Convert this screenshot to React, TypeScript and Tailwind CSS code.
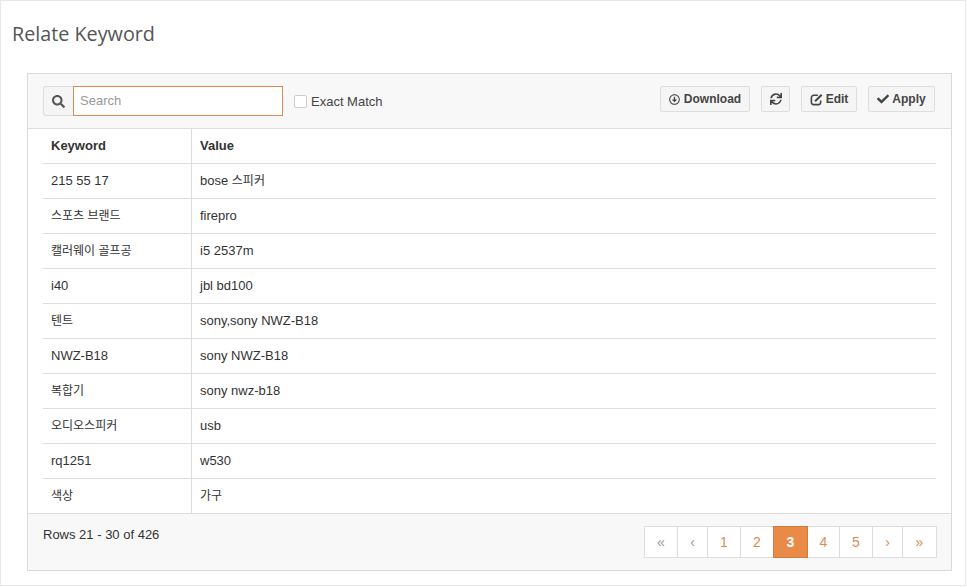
import { FaSearch, FaSync, FaCheck, FaRegArrowAltCircleDown } from 'react-icons/fa';

const rows = [
  ['215 55 17', 'bose 스피커'],
  ['스포츠 브랜드', 'firepro'],
  ['캘러웨이 골프공', 'i5 2537m'],
  ['i40', 'jbl bd100'],
  ['텐트', 'sony,sony NWZ-B18'],
  ['NWZ-B18', 'sony NWZ-B18'],
  ['복합기', 'sony nwz-b18'],
  ['오디오스피커', 'usb'],
  ['rq1251', 'w530'],
  ['색상', '가구'],
];

const pages = [
  { label: '«', width: 'w-[34px]', muted: true },
  { label: '‹', width: 'w-[31px]', muted: true },
  { label: '1', width: 'w-[34px]' },
  { label: '2', width: 'w-[34px]' },
  { label: '3', width: 'w-[35px]', active: true },
  { label: '4', width: 'w-[33px]' },
  { label: '5', width: 'w-[34px]' },
  { label: '›', width: 'w-[31px]' },
  { label: '»', width: 'w-[35px]' },
];

// Korean runs sit a little smaller than the latin text around them
function Cell({ text }: { text: string }) {
  const parts = text.split(/([가-힣]+(?: [가-힣]+)*)/);
  return (
    <>
      {parts.map((part, i) =>
        i % 2 === 1 ? (
          <span key={i} className="text-[12px]">
            {part}
          </span>
        ) : (
          part
        ),
      )}
    </>
  );
}

function EditIcon() {
  return (
    <svg width="13" height="13" viewBox="0 0 14 14" fill="none" stroke="currentColor">
      <path d="M8.5 2.5H4A2.5 2.5 0 0 0 1.5 5v5A2.5 2.5 0 0 0 4 12.5h5a2.5 2.5 0 0 0 2.5-2.5V8" strokeWidth="1.7" />
      <path d="M5.5 8.8 12.6 1.8" strokeWidth="2.2" />
    </svg>
  );
}

export default function App() {
  return (
    <div className="h-[587px] w-[967px] overflow-hidden bg-white font-['Liberation_Sans','Noto_Sans_CJK_KR',sans-serif] text-[13px] text-[#333]">
      <div className="h-[586px] w-[966px] border border-[#e8e8e8] pl-[26px] pr-[13px]">
        {/* Title */}
        <h1 className="-ml-[15px] h-[72px] pt-[19px] font-['Open_Sans',sans-serif] text-[19.75px] leading-[28px] text-[#555]">
          Relate Keyword
        </h1>

        <div className="h-[498px] w-[925px] border border-[#d9d9d9]">
          {/* Toolbar */}
          <div className="flex h-[55px] items-start justify-between border-b border-[#ddd] bg-[#f8f8f8] pl-[15px] pr-[16px] pt-[12px]">
            <div className="flex items-center">
              <span className="flex h-[30px] w-[30px] items-center justify-center rounded-l-[3px] border border-r-0 border-[#ddd] bg-[#f5f5f5] text-[#555]">
                <FaSearch className="text-[13px]" />
              </span>
              <input
                placeholder="Search"
                className="h-[30px] w-[210px] border border-[#e08a55] bg-white px-[6px] pb-[2px] text-[13px] outline-none placeholder:text-[#999]"
              />
              <span className="ml-[11px] mt-[1px] h-[13px] w-[13px] rounded-[2px] border border-[#ccc] bg-white" />
              <span className="ml-[4px] pt-[1px] text-[13px] text-[#444]">Exact Match</span>
            </div>
            <div className="flex text-[12px] font-bold text-[#444]">
              <button className="flex h-[26px] w-[90px] items-center justify-center gap-[4px] rounded-[2px] border border-[#ddd] bg-[#f5f5f5]">
                <FaRegArrowAltCircleDown className="text-[11px]" />
                Download
              </button>
              <button className="ml-[11px] flex h-[26px] w-[29px] items-center justify-center rounded-[2px] border border-[#ddd] bg-[#f5f5f5]">
                <FaSync className="text-[12px]" />
              </button>
              <button className="ml-[11px] flex h-[26px] w-[56px] items-center justify-center gap-[3px] rounded-[2px] border border-[#ddd] bg-[#f5f5f5]">
                <EditIcon />
                Edit
              </button>
              <button className="ml-[11px] flex h-[26px] w-[67px] items-center justify-center gap-[3px] rounded-[2px] border border-[#ddd] bg-[#f5f5f5]">
                <FaCheck className="text-[12px]" />
                Apply
              </button>
            </div>
          </div>

          {/* Table */}
          <div className="mx-[15px] w-[893px]">
            <div className="flex h-[35px] items-center border-b border-[#ddd] font-bold">
              <div className="flex h-full w-[149px] items-center border-r border-[#ddd] pl-[8px]">Keyword</div>
              <div className="pl-[8px]">Value</div>
            </div>
            {rows.map((row, i) => (
              <div
                key={row[0]}
                className={`flex items-center ${i < rows.length - 1 ? 'h-[35px] border-b border-[#ddd]' : 'h-[34px]'}`}
              >
                <div className="flex h-full w-[149px] items-center border-r border-[#ddd] pl-[8px]">
                  <Cell text={row[0]} />
                </div>
                <div className="pl-[8px]">
                  <Cell text={row[1]} />
                </div>
              </div>
            ))}
          </div>

          {/* Footer */}
          <div className="flex h-[57px] items-start justify-between border-t border-[#ddd] bg-[#f8f8f8] pl-[15px] pr-[14px] pt-[12px]">
            <span className="mt-[1px] text-[13px] leading-[16px]">Rows 21 - 30 of 426</span>
            <div className="flex">
              {pages.map((p) => (
                <span
                  key={p.label}
                  className={`-ml-px flex h-[32px] items-center justify-center border text-[14px] ${p.width} ${
                    p.active
                      ? 'z-10 border-[#d57a3f] bg-[#ea8a47] font-bold text-white'
                      : p.muted
                        ? 'border-[#ddd] bg-white text-[#999]'
                        : 'border-[#ddd] bg-white text-[#e08a55]'
                  }`}
                >
                  {p.label}
                </span>
              ))}
            </div>
          </div>
        </div>
      </div>
    </div>
  );
}
